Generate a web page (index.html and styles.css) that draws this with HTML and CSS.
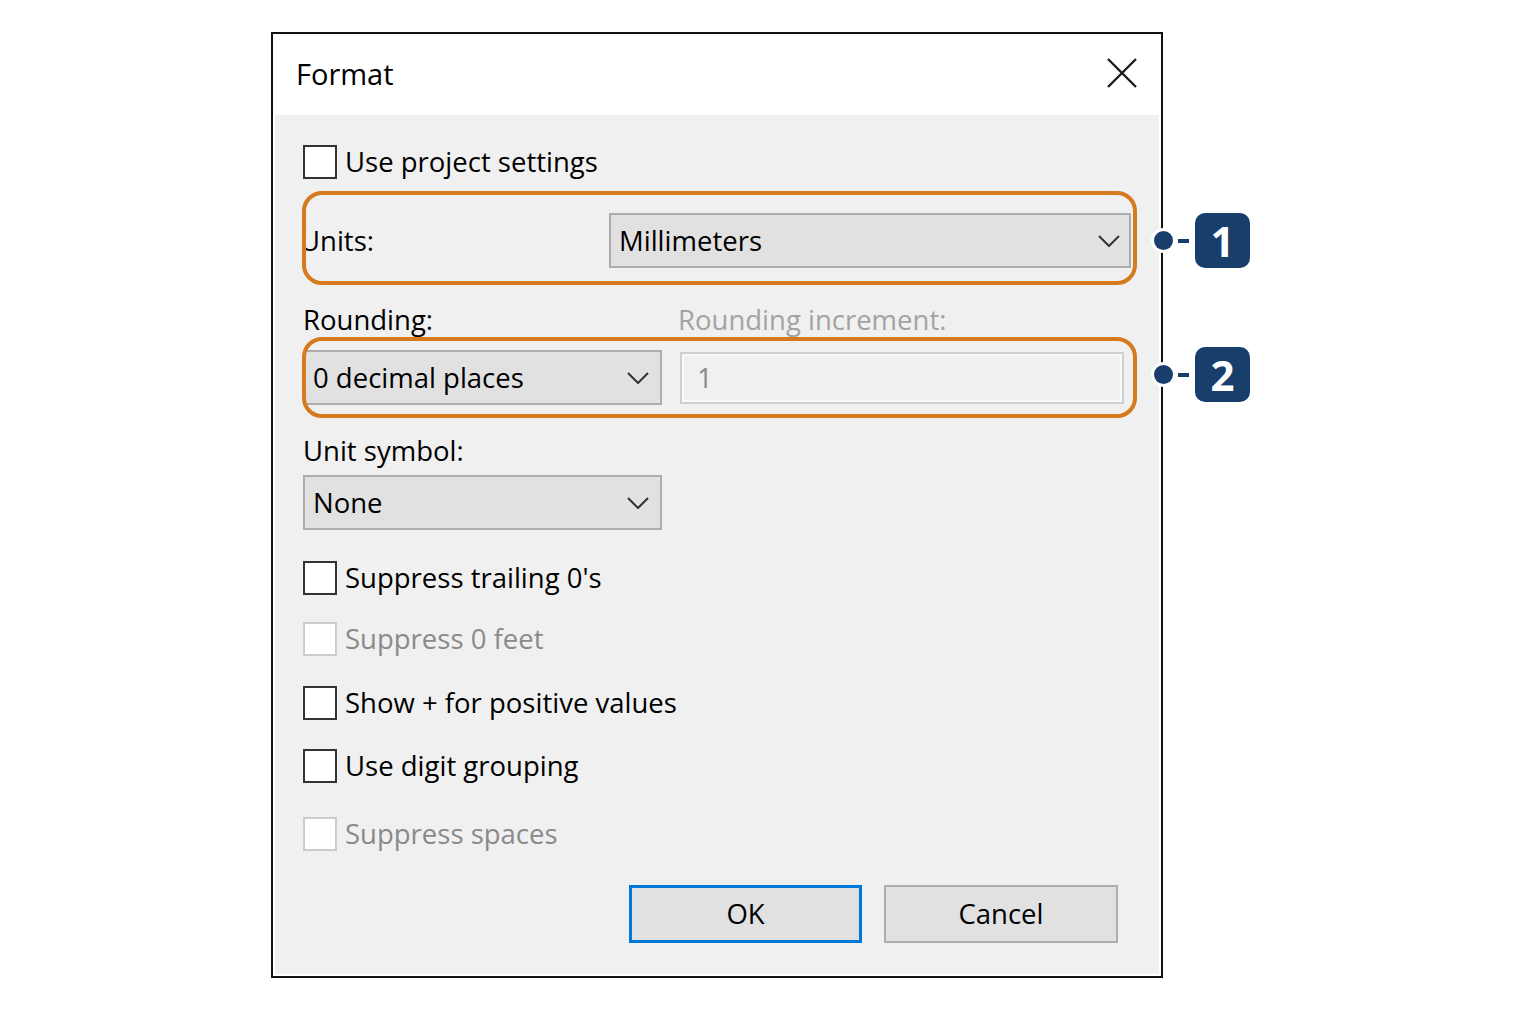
FILE: index.html
```html
<!DOCTYPE html>
<html>
<head>
<meta charset="utf-8">
<title>Format</title>
<link rel="stylesheet" href="styles.css">
</head>
<body>
<div class="stage">
  <div class="dialog">
    <div class="titlebar">
      <span class="title">Format</span>
      <svg class="close" width="30" height="30" viewBox="0 0 30 30"><path d="M1 1 L29 29 M29 1 L1 29" stroke="#1a1a1a" stroke-width="2.4" fill="none"/></svg>
    </div>
    <div class="content">
      <div class="check"><span class="box"></span><span class="ctext">Use project settings</span></div>
      <div class="units-row">
        <span class="label units-label">Units:</span>
        <div class="select select-units"><span>Millimeters</span><svg class="chev" width="22" height="12" viewBox="0 0 22 12"><path d="M1 1 L11 11 L21 1" stroke="#333" stroke-width="2" fill="none"/></svg></div>
      </div>
      <div class="labels-row">
        <span class="label">Rounding:</span>
        <span class="label disabled inc-label">Rounding increment:</span>
      </div>
      <div class="round-row">
        <div class="select select-half"><span>0 decimal places</span><svg class="chev" width="22" height="12" viewBox="0 0 22 12"><path d="M1 1 L11 11 L21 1" stroke="#333" stroke-width="2" fill="none"/></svg></div>
        <div class="textbox">1</div>
      </div>
      <div class="label symbol-label">Unit symbol:</div>
      <div class="select select-half select-none"><span>None</span><svg class="chev" width="22" height="12" viewBox="0 0 22 12"><path d="M1 1 L11 11 L21 1" stroke="#333" stroke-width="2" fill="none"/></svg></div>
      <div class="check c-trailing"><span class="box"></span><span class="ctext">Suppress trailing 0's</span></div>
      <div class="check c-feet off"><span class="box"></span><span class="ctext">Suppress 0 feet</span></div>
      <div class="check c-plus"><span class="box"></span><span class="ctext">Show + for positive values</span></div>
      <div class="check c-digit"><span class="box"></span><span class="ctext">Use digit grouping</span></div>
      <div class="check c-spaces off"><span class="box"></span><span class="ctext">Suppress spaces</span></div>
      <div class="buttons">
        <div class="btn btn-ok">OK</div>
        <div class="btn btn-cancel">Cancel</div>
      </div>
    </div>
  </div>

  <div class="hl hl-1"></div>
  <div class="hl hl-2"></div>

  <div class="callout callout-1"><span class="dot"></span><span class="dash"></span><span class="badge">1</span></div>
  <div class="callout callout-2"><span class="dot"></span><span class="dash"></span><span class="badge">2</span></div>
</div>
</body>
</html>
```
FILE: styles.css
```css
* { box-sizing: border-box; }
html, body { margin: 0; padding: 0; background: #ffffff; }
body {
  font-family: "Open Sans", "Noto Sans", sans-serif;
  font-size: 27.5px;
  color: #000;
}
.stage {
  position: relative;
  width: 1520px;
  height: 1010px;
  padding: 32px 0 0 271px;
}
.dialog {
  width: 892px;
  height: 946px;
  border: 2px solid #111;
  background: #ffffff;
  display: flex;
  flex-direction: column;
}
.titlebar {
  height: 81px;
  flex: none;
  display: flex;
  align-items: center;
  justify-content: space-between;
  padding: 0 24px 0 23px;
}
.title {
  font-size: 29px;
  line-height: 36px;
  margin-top: -1px;
}
.close { display: block; margin-top: -4px; }
.content {
  flex: 1;
  margin: 0 2px 2px 2px;
  background: #f0f0f0;
  padding: 30px 0 0 28px;
  display: flex;
  flex-direction: column;
  align-items: flex-start;
}
.label { line-height: 36px; white-space: nowrap; }
.disabled { color: #a3a3a3; }
.check {
  display: flex;
  align-items: center;
  height: 34px;
  white-space: nowrap;
}
.box {
  width: 34px;
  height: 34px;
  border: 2px solid #333;
  background: #fff;
  flex: none;
  margin-right: 8px;
}
.ctext { line-height: 36px; }
.check.off .box { border-color: #cccccc; }
.check.off .ctext { color: #8a8a8a; }
.units-row {
  margin-top: 34px;
  height: 55px;
  display: flex;
  align-items: center;
}
.units-label { width: 307px; margin-left: -3px; padding-left: 0; }
.units-row .select { margin-left: 2px; }
.select {
  height: 55px;
  background: #e1e1e1;
  border: 2px solid #adadad;
  display: flex;
  align-items: center;
  justify-content: space-between;
  padding: 0 12px 0 8px;
  white-space: nowrap;
  line-height: 36px;
}
.select-units { width: 522px; padding-right: 9px; }
.select-half { width: 359px; padding-right: 11px; }
.chev { display: block; flex: none; }
.labels-row {
  margin-top: 34px;
  display: flex;
  height: 36px;
}
.labels-row .label:first-child { width: 375px; }
.round-row {
  margin-top: 12px;
  height: 55px;
  display: flex;
  align-items: center;
}
.textbox {
  margin-left: 18px;
  width: 444px;
  height: 52px;
  border: 2px solid #d0d0d0;
  box-shadow: inset 0 0 0 2px #f9f9f9;
  background: #f0f0f0;
  color: #8a8a8a;
  line-height: 48px;
  padding-left: 15px;
}
.symbol-label { margin-top: 28px; }
.select-none { margin-top: 6px; }
.c-trailing { margin-top: 31px; }
.c-feet { margin-top: 27px; }
.c-plus { margin-top: 30px; }
.c-digit { margin-top: 29px; }
.c-spaces { margin-top: 34px; }
.buttons {
  margin-top: 34px;
  margin-left: 326px;
  display: flex;
  gap: 22px;
}
.btn {
  width: 234px;
  height: 58px;
  background: #e1e1e1;
  display: flex;
  align-items: center;
  justify-content: center;
  line-height: 36px;
}
.btn-ok { border: 3px solid #0078d7; width: 233px; }
.btn-cancel { border: 2px solid #adadad; }

.hl {
  position: absolute;
  left: 302px;
  width: 835px;
  border: 4px solid #d67a1e;
  border-radius: 20px;
}
.hl-1 { top: 191px; height: 94px; }
.hl-2 { top: 337px; height: 81px; }

.callout {
  position: absolute;
  left: 1154px;
  height: 55px;
  display: flex;
  align-items: center;
}
.callout-1 { top: 213px; }
.callout-2 { top: 347px; }
.dot {
  width: 19px;
  height: 19px;
  border-radius: 50%;
  background: #183e6c;
  box-shadow: 0 0 0 3px #ffffff;
}
.dash {
  width: 11px;
  height: 4px;
  background: #183e6c;
  margin-left: 5px;
}
.badge {
  margin-left: 6px;
  width: 55px;
  height: 55px;
  border-radius: 10px;
  background: #183e6c;
  color: #fff;
  font-family: "Open Sans", "DejaVu Sans", sans-serif;
  font-weight: 700;
  font-size: 42px;
  line-height: 55px;
  text-align: center;
}
```
